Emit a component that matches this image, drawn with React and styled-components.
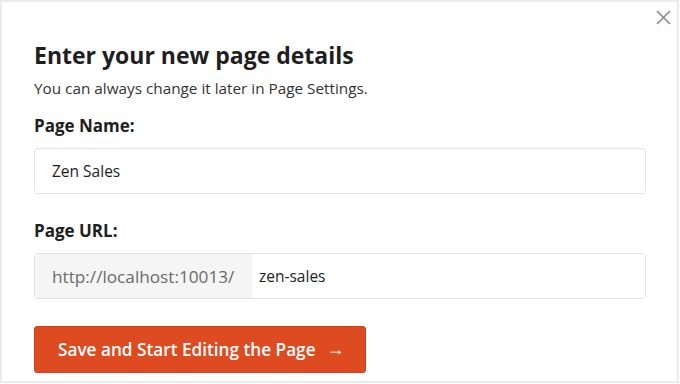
import React, { useState } from 'react'
import styled, { createGlobalStyle } from 'styled-components'

const GlobalStyle = createGlobalStyle`
  body {
    margin: 0;
    font-family: "Open Sans", "Liberation Sans", sans-serif;
    background: #fff;
  }
`

const Modal = styled.div`
  position: relative;
  box-sizing: border-box;
  width: 679px;
  height: 383px;
  border: 2px solid #ebebeb;
  background: #fff;
  padding: 38px 32px 0 32px;
`

const CloseButton = styled.button`
  position: absolute;
  top: 6px;
  right: 5px;
  width: 18px;
  height: 18px;
  padding: 0;
  border: none;
  background: none;
  cursor: pointer;
  display: flex;
  align-items: center;
  justify-content: center;
`

const Title = styled.h2`
  margin: 0;
  font-size: 23px;
  line-height: 30px;
  font-weight: 700;
  color: #1e1e1e;
`

const Subtitle = styled.p`
  margin: 7px 0 0;
  font-size: 15.3px;
  line-height: 22px;
  color: #333;
`

const Field = styled.div`
  display: flex;
  flex-direction: column;
  margin-top: ${p => p.$top}px;
`

const Label = styled.label`
  font-size: 17px;
  line-height: 24px;
  font-weight: 700;
  color: #1e1e1e;
  margin-bottom: 10px;
`

const Input = styled.input`
  box-sizing: border-box;
  width: 612px;
  height: 46px;
  border: 1px solid #e2e2e2;
  border-radius: 4px;
  padding: 0 17px;
  font-family: inherit;
  font-size: 15.5px;
  color: #1e1e1e;
  outline: none;
`

const UrlGroup = styled.div`
  box-sizing: border-box;
  display: flex;
  width: 612px;
  height: 46px;
  border: 1px solid #e2e2e2;
  border-radius: 4px;
  overflow: hidden;
`

const UrlPrefix = styled.span`
  display: flex;
  align-items: center;
  width: 217px;
  padding-left: 17px;
  box-sizing: border-box;
  background: #f5f5f5;
  color: #6a6a6a;
  font-size: 17.2px;
`

const SlugInput = styled.input`
  flex: 1;
  border: none;
  padding: 0 7px;
  font-family: inherit;
  font-size: 15.5px;
  color: #1e1e1e;
  outline: none;
`

const SubmitButton = styled.button`
  margin-top: 27px;
  display: flex;
  align-items: center;
  gap: 11px;
  height: 47px;
  padding: 0 20px 0 23px;
  border: 1px solid #d2411a;
  border-radius: 3px;
  background: #de4b21;
  color: #fff;
  font-family: inherit;
  font-size: 17.2px;
  font-weight: 600;
  cursor: pointer;
`

const Arrow = styled.span`
  font-size: 18px;
  font-weight: 700;
  margin-bottom: 4px;
`

const App = () => {
  const [name, setName] = useState('Zen Sales')
  const [slug, setSlug] = useState('zen-sales')

  return (
    <>
      <GlobalStyle />
      <Modal>
        <CloseButton aria-label="Close">
          <svg width="15" height="15" viewBox="0 0 15 15">
            <path d="M1 1L14 14M14 1L1 14" stroke="#8a8a8a" strokeWidth="1.6" />
          </svg>
        </CloseButton>
        <Title>Enter your new page details</Title>
        <Subtitle>You can always change it later in Page Settings.</Subtitle>
        <Field $top={15}>
          <Label>Page Name:</Label>
          <Input value={name} onChange={e => setName(e.target.value)} />
        </Field>
        <Field $top={25}>
          <Label>Page URL:</Label>
          <UrlGroup>
            <UrlPrefix>http://localhost:10013/</UrlPrefix>
            <SlugInput value={slug} onChange={e => setSlug(e.target.value)} />
          </UrlGroup>
        </Field>
        <SubmitButton>
          Save and Start Editing the Page
          <Arrow>→</Arrow>
        </SubmitButton>
      </Modal>
    </>
  )
}

export default App
